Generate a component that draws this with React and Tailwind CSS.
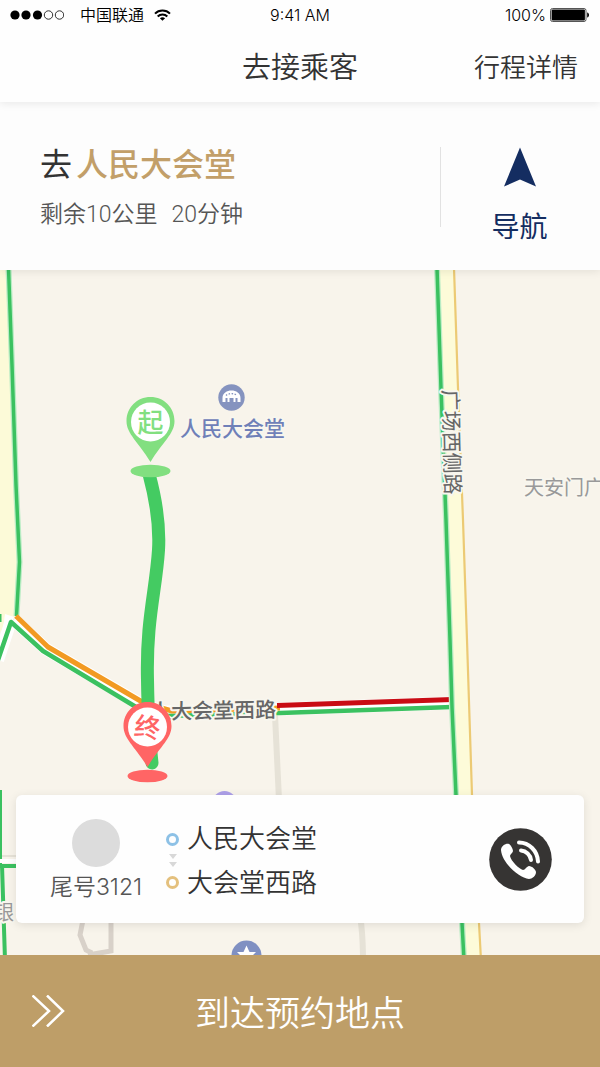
import React, { useState } from 'react'

const TRIP = {
  target: '人民大会堂',
  distance: '剩余10公里',
  duration: '20分钟',
  passenger: '尾号3121',
  from: '人民大会堂',
  to: '大会堂西路',
}

function WifiIcon() {
  return (
    <svg viewBox="0 0 17 12" className="w-[17px] h-3" fill="none" stroke="#000" strokeWidth="2" aria-hidden="true">
      <path d="M1 4.6C5 .4 12 .4 16 4.6" />
      <path d="M3.7 7.5c2.6-2.7 7-2.7 9.6 0" />
      <path d="M8.500 11.800 5.900 9.300c1.500-1.300 3.700-1.300 5.200 0z" fill="#000" stroke="none" />
    </svg>
  )
}

function StatusBar() {
  return (
    <div className="grid grid-cols-[1fr_auto_1fr] items-center h-[30px] px-2.5 text-[16px] leading-5 font-[350] text-black">
      <div className="flex items-center">
        <svg viewBox="0 0 54 10" className="w-[54px] h-2.5" aria-hidden="true">
          <circle cx="5" cy="5" r="4.600" />
          <circle cx="16" cy="5" r="4.600" />
          <circle cx="27.500" cy="5" r="4.600" />
          <circle cx="38.500" cy="5" r="4.200" fill="none" stroke="#000" strokeWidth=".8" />
          <circle cx="49.500" cy="5" r="4.200" fill="none" stroke="#000" strokeWidth=".8" />
        </svg>
        <span className="ml-4 mr-2.5">中国联通</span>
        <WifiIcon />
      </div>
      <span>9:41 AM</span>
      <div className="flex items-center justify-end gap-1">
        <span>100%</span>
        <svg viewBox="0 0 40 14" className="w-10 h-3.5" aria-hidden="true">
          <rect x=".5" y=".5" width="35.500" height="13" rx="2" fill="none" stroke="#555" />
          <rect x="1.600" y="1.600" width="33.300" height="10.800" rx="1" />
          <path d="M37.200 4.500c2.400.4 2.400 4.600 0 5z" />
        </svg>
      </div>
    </div>
  )
}

function Pin({ x, y, color, label, tilt = 0 }) {
  return (
    <g transform={`translate(${x} ${y})`}>
      <ellipse cx="0" cy="74" rx="20" ry="6.300" fill={color} />
      <path d="M0 0C13.500 0 24 10.500 24 24C24 37 12 45 0 65C-12 45-24 37-24 24C-24 10.500-13.500 0 0 0Z" fill={color} />
      <circle cx="0" cy="25" r="19.500" fill="#fff" />
      <text
        x="0" y="35" textAnchor="middle" fontSize="26" fontWeight="500" fill={color}
        transform={`rotate(${tilt} 0 25)`}
      >
        {label}
      </text>
    </g>
  )
}

function MapView() {
  return (
    <svg
      viewBox="0 270 600 685"
      preserveAspectRatio="xMidYMin slice"
      className="absolute inset-0 w-full h-full"
      role="img"
      aria-label="路线地图"
    >
      <rect x="0" y="270" width="600" height="685" fill="#f8f4eb" />

      {/* side streets */}
      <g fill="none" stroke="#e6e2d7" strokeWidth="6">
        <path d="M275 715 279 800" />
        <path d="M360 915Q363 935 363 960" />
        <path d="M0 856H20" strokeWidth="2" />
        <path d="M84 915 80 935 86 950 92 953M111 915V951L88 955" stroke="#d8d1c9" strokeWidth="5" />
      </g>

      {/* left avenue */}
      <path d="M0 270H8L12 365 16 485 19 562 16 615 0 632Z" fill="#fcfad8" />
      <path d="M-2 660 11 621" stroke="#fff" strokeWidth="12" fill="none" />
      <path d="M0 650 5 614 14 617 10 628Z" fill="#fff" />
      <g fill="none" strokeLinejoin="round">
        <path d="M14 620 46 649 142 705 165 712 280 709 452 703" stroke="#fff" strokeWidth="13" />
        <path d="M8.500 268 12 365 16 485 19.500 562 16.500 616" stroke="#b9ecc4" strokeWidth="6" />
        <path d="M8.500 268 12 365 16 485 19.500 562 16.500 616" stroke="#3bc160" strokeWidth="3.500" />
        <path d="M-2 660 11 622 43 651 136 707 165 716 280 713 452 707" stroke="#3bc160" strokeWidth="4.500" />
        <path d="M0 614V622" stroke="#3bc160" strokeWidth="3" />
        <path d="M16 616 48 647 144 703 172 711 280 708" stroke="#f29a22" strokeWidth="5" />
        <path d="M277 705.500 452 699.500" stroke="#c90c14" strokeWidth="5" />
        <path d="M0 790V865M2 865 5 960" stroke="#3bc160" strokeWidth="4" />
        <path d="M0 861H20" stroke="#fff" strokeWidth="4" />
        <path d="M0 866H20" stroke="#3bc160" strokeWidth="4" />
      </g>

      {/* right avenue */}
      <path d="M437 268 441 388 446 520 450 640 456 795 462 923 464 960H481L479 923 472 795 467 640 463 520 458 388 454 268Z" fill="#fdfbd9" />
      <g fill="none">
        <path d="M437 268 441 388 446 520 450 640 452 707 456 795 462 923 464 960" stroke="#b9ecc4" strokeWidth="6" />
        <path d="M437 268 441 388 446 520 450 640 452 707 456 795 462 923 464 960" stroke="#3bc160" strokeWidth="3.500" />
        <path d="M454 268 458 388 463 520 467 640 472 795 479 923 481 960" stroke="#ecca74" strokeWidth="2.200" />
      </g>

      {/* road and place names */}
      <g fontSize="21" stroke="#f8f6ee" strokeWidth="4" strokeLinejoin="round" paintOrder="stroke">
        <text x="276" y="718" textAnchor="end" fontWeight="500" fill="#666" transform="rotate(-1 223 710)">人大会堂西路</text>
        <text x="452" y="450" textAnchor="middle" fill="#666" transform="rotate(88.500 452 442)">广场西侧路</text>
        <text x="180" y="436" fontWeight="500" fill="#6f80b8">人民大会堂</text>
        <text x="524" y="495" fontSize="20" fill="#999">天安门广</text>
        <text x="-6" y="920" fontSize="20" fill="#999">银</text>
      </g>

      {/* points of interest */}
      <g>
        <circle cx="231.500" cy="397.500" r="13.200" fill="#8593bf" />
        <path d="M222.500 402v-4c0-10 18-10 18 0v4h-3v-4h-2v4h-2v-4h-4v4h-2v-4h-2v4z" fill="#fff" />
        <path d="M226 395.500c2.500-2.500 8.500-2.500 11 0" stroke="#8593bf" strokeWidth="1.300" strokeDasharray="1.500 1.500" fill="none" />
        <circle cx="224.500" cy="803" r="12" fill="#ada0e8" />
        <circle cx="246.500" cy="955.500" r="15" fill="#8090c2" />
        <path d="M246.500 945.500 249.500 952H256L251 957 252.500 964 246.500 960 240.500 964 242 957 237 952H243.500Z" fill="#fff" />
      </g>

      {/* route */}
      <path
        d="M149 474C156 500 160 525 158.500 550C156 590 146 620 147.500 680C148 715 150 745 152 763"
        fill="none" stroke="#44cb62" strokeWidth="13" strokeLinecap="round"
      />
      <Pin x={150.5} y={397} color="#82df80" label="起" />
      <Pin x={147.5} y={702} color="#ff6565" label="终" tilt={8} />
    </svg>
  )
}

function PassengerCard() {
  return (
    <section className="relative flex items-center mx-4 mb-8 h-32 px-8 bg-[#fefefe] rounded-md shadow-[0_2px_10px_rgba(0,0,0,0.1)]">
      <div className="flex flex-col items-center gap-1 w-24 pt-1">
        <span className="size-12 rounded-full bg-[#dcdcdc]" />
        <span className="text-[23px] leading-8 font-[350] text-[#555]">{TRIP.passenger}</span>
      </div>
      <div className="flex items-center gap-2 ml-[22px] pt-1">
        <div className="flex flex-col items-center gap-2">
          <span className="size-[13px] rounded-full border-[3px] border-[#8dc1e6]" />
          <svg viewBox="0 0 10 14" className="w-2.5 h-3.5" fill="#d8d8d8" aria-hidden="true">
            <path d="M1 0h8L5 5zM1 8h8l-4 5z" />
          </svg>
          <span className="size-[13px] rounded-full border-[3px] border-[#e4c07d]" />
        </div>
        <div className="flex flex-col text-[26px] leading-[44px] font-[350]">
          <span>{TRIP.from}</span>
          <span>{TRIP.to}</span>
        </div>
      </div>
      <button aria-label="拨打电话" className="ml-auto cursor-pointer">
        <svg viewBox="0 0 63 63" className="size-[63px]" aria-hidden="true">
          <circle cx="31.500" cy="31.500" r="31.300" fill="#363433" />
          <path d="M12 22C12 18 17 15 20 16C22 17 24 21 24 23C24 25 21 26 21 28C22 33 30 41 34 42C36 42 38 38 40 38C43 38 47 42 47 44C47 48 43 51 40 51C30 50 13 35 12 22Z" fill="#fff" />
          <path d="M30 14.500A19 20 0 0 1 49 33.500M32 22.500A11 11 0 0 1 42 32" fill="none" stroke="#fff" strokeWidth="4" strokeLinecap="round" />
        </svg>
      </button>
    </section>
  )
}

function App() {
  const [arrived, setArrived] = useState(false)

  return (
    <div className="min-h-screen flex flex-col bg-[#fdfdfd] font-['Inter','Noto_Sans_CJK_SC',sans-serif] text-[#333]">

      <header className="relative z-20 bg-[#fefefe] shadow-[0_2px_8px_rgba(0,0,0,0.08)]">
        <StatusBar />
        <div className="grid grid-cols-[1fr_auto_1fr] items-center h-[72px] pt-1 px-[22px] font-[350]">
          <h1 className="col-start-2 text-[29px] leading-10">去接乘客</h1>
          <a href="#detail" className="justify-self-end text-[26px] leading-10">行程详情</a>
        </div>
      </header>

      <section className="relative z-10 flex items-start h-[168px] pt-[45px] bg-[#fdfdfd] shadow-[0_2px_8px_rgba(0,0,0,0.08)]">
        <div className="flex-1 pl-10">
          <h2 className="flex gap-1 text-[32px] leading-9">
            去<span className="font-medium text-[#c29f69]">{TRIP.target}</span>
          </h2>
          <p className="flex gap-3.5 mt-4 font-['Roboto','Noto_Sans_CJK_SC',sans-serif] text-[23px] leading-8 font-[350] text-[#555]">
            <span>{TRIP.distance}</span>
            <span>{TRIP.duration}</span>
          </p>
        </div>
        <button className="flex flex-col items-center w-40 h-20 pr-0.5 border-l border-[#e2e2e2] text-[#142d61] cursor-pointer">
          <svg viewBox="0 0 32 39" className="w-8 h-10 shrink-0" fill="currentColor" aria-hidden="true">
            <path d="M16 0 32 39 16 32 0 39Z" />
          </svg>
          <span className="mt-[22px] text-[28px] leading-9">导航</span>
        </button>
      </section>

      <main className="relative flex-1 flex flex-col justify-end overflow-hidden">
        <MapView />
        <PassengerCard />
      </main>

      <button
        onClick={() => setArrived(!arrived)}
        aria-pressed={arrived}
        className="grid grid-cols-[1fr_auto_1fr] items-center h-28 px-8 bg-[#be9e68] text-white cursor-pointer"
      >
        <svg viewBox="0 0 33 32" className="w-[33px] h-8" fill="none" stroke="#fff" strokeWidth="2.500" aria-hidden="true">
          <path d="M.5 .5 17 16 .5 31.500M15 .5 31 16 15 31.500" />
        </svg>
        <span className="pt-1 text-[35px] leading-[48px] font-[350]">到达预约地点</span>
      </button>

    </div>
  )
}

export default App
